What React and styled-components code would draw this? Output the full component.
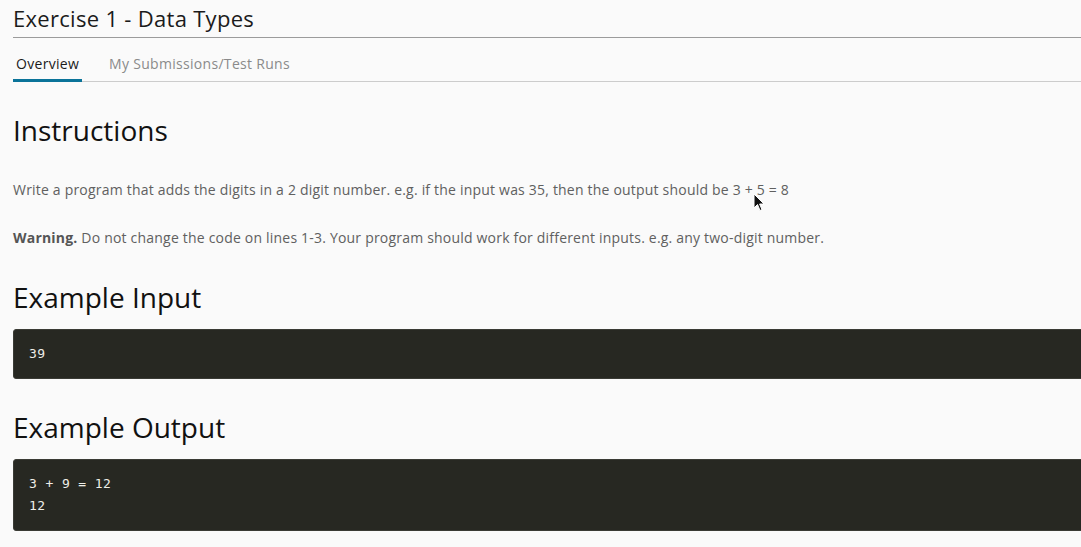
import React from 'react';
import styled, { createGlobalStyle } from 'styled-components';

const GlobalStyle = createGlobalStyle`
  html, body {
    margin: 0;
    padding: 0;
    background: #fafafa;
    overflow: hidden;
  }
  body {
    font-family: "Open Sans", Lato, sans-serif;
    color: #000;
  }
`;

const Page = styled.div`
  width: 1120px;
  padding-left: 13px;
  position: relative;
`;

const TitleBar = styled.div`
  height: 37px;
  border-bottom: 1px solid #9b9b9b;
  display: flex;
  align-items: center;
`;

const Title = styled.h1`
  margin: 0;
  font-size: 22px;
  font-weight: 400;
  letter-spacing: 0.3px;
  color: #1b1b1b;
  line-height: 1;
  padding-bottom: 2px;
`;

const TabRow = styled.div`
  height: 43px;
  border-bottom: 1px solid #cccccc;
  display: flex;
  gap: 24px;
`;

const Tab = styled.div`
  display: flex;
  align-items: center;
  padding: 9px 3px 0;
  font-size: 14px;
  letter-spacing: 0.3px;
  color: ${p => (p.active ? '#1b1b1b' : '#8a8a8a')};
  border-bottom: 3px solid ${p => (p.active ? '#0a7399' : 'transparent')};
  margin-bottom: -1px;
`;

const Content = styled.div`
  display: flex;
  flex-direction: column;
`;

const Heading = styled.h2`
  margin: ${p => p.top}px 0 0;
  font-size: 28px;
  font-weight: 400;
  color: #111;
  line-height: 32px;
`;

const Para = styled.p`
  margin: ${p => p.top}px 0 0;
  font-size: 14px;
  letter-spacing: 0.2px;
  line-height: 20px;
  color: #606060;
  b {
    color: #555;
    font-weight: 700;
  }
`;

const Code = styled.pre`
  margin: ${p => p.top}px 0 0;
  background: #272822;
  border: 1px solid #3a3b35;
  border-radius: 3px;
  padding: 13px 15px;
  font-family: "DejaVu Sans Mono", monospace;
  font-size: 13px;
  letter-spacing: 0.4px;
  line-height: 22px;
  color: #eeeee8;
`;

const Cursor = styled.svg`
  position: absolute;
  left: 753px;
  top: 193px;
`;

export default function App() {
  return (
    <>
      <GlobalStyle />
      <Page>
        <TitleBar>
          <Title>Exercise 1 - Data Types</Title>
        </TitleBar>
        <TabRow>
          <Tab active>Overview</Tab>
          <Tab>My Submissions/Test Runs</Tab>
        </TabRow>
        <Content>
          <Heading top={32}>Instructions</Heading>
          <Para top={34}>
            Write a program that adds the digits in a 2 digit number. e.g. if the input was 35, then the output should be 3 + 5 = 8
          </Para>
          <Para top={28}>
            <b>Warning.</b> Do not change the code on lines 1-3. Your program should work for different inputs. e.g. any two-digit number.
          </Para>
          <Heading top={33}>Example Input</Heading>
          <Code top={16}>39</Code>
          <Heading top={32}>Example Output</Heading>
          <Code top={16}>{'3 + 9 = 12\n12'}</Code>
        </Content>
        <Cursor width="12" height="19" viewBox="0 0 12 19">
          <path d="M1 1 L1 15 L4.5 11.5 L7 17.5 L9 16.6 L6.6 11 L11 11 Z" fill="#111" stroke="#fff" strokeWidth="1" />
        </Cursor>
      </Page>
    </>
  );
}
